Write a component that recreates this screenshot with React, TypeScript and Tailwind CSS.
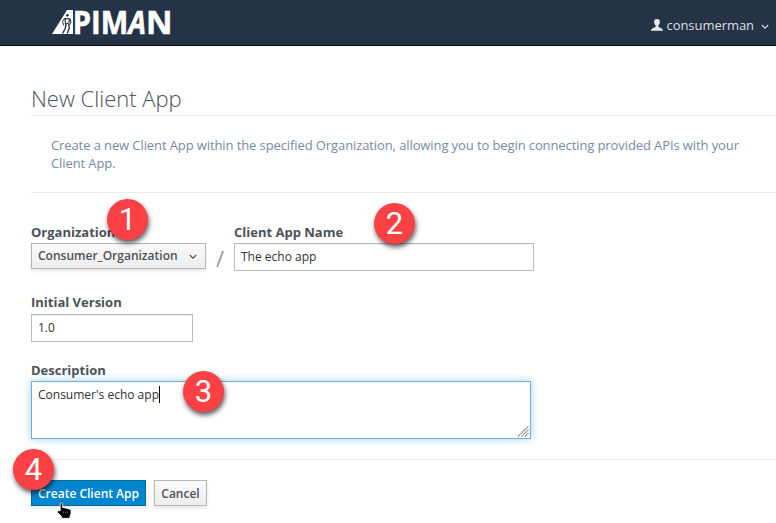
import React from "react";

function Logo() {
  return (
    <svg width="120" height="28" viewBox="0 0 120 28" className="block overflow-visible" aria-label="APIMAN">
      <path d="M0 25 L15 1 H21 V25 Z" fill="#fff" />
      <g stroke="#253346" fill="none" strokeLinecap="round" strokeLinejoin="round">
        <circle cx="15.3" cy="6.3" r="0.9" fill="#253346" strokeWidth="1" />
        <path d="M13 9.5 L17.5 9.8 L17 14 L13.5 15 Z" strokeWidth="1.2" />
        <path d="M12.5 9.5 L10.6 12.5 L11.5 16 M18 10 L19 13.5 L17.5 16" strokeWidth="1" />
        <path d="M14 15.5 L13.2 19.5 L10.8 24 M16.8 15.5 L17.2 19 L15.5 24" strokeWidth="1.4" />
      </g>
      <g fill="#fff" stroke="#fff" strokeWidth="0.6" fontFamily="'Open Sans', sans-serif" fontWeight="700" fontSize="33">
        <text x="20.8" y="24.7" textLength="55.5" lengthAdjust="spacingAndGlyphs">PIM</text>
        <text x="76.4" y="24.7" fontStyle="italic" textLength="17.5" lengthAdjust="spacingAndGlyphs">A</text>
        <text x="94" y="24.7" textLength="26.5" lengthAdjust="spacingAndGlyphs">N</text>
      </g>
    </svg>
  );
}

function Chevron({ className }: { className: string }) {
  return (
    <svg width="8" height="6" viewBox="0 0 8 6" className={className}>
      <path d="M0.8 1 L4 4.2 L7.2 1" fill="none" stroke="currentColor" strokeWidth="1.1" />
    </svg>
  );
}

function Badge({ n, className }: { n: string; className: string }) {
  return (
    <div
      className={`absolute flex size-[41px] items-center justify-center rounded-full bg-[#fc4144] font-['Roboto',sans-serif] text-[31px] leading-none text-white shadow-[1px_3px_5px_rgba(0,0,0,0.65)] ${className}`}
    >
      {n}
    </div>
  );
}

function Pointer() {
  return (
    <svg width="15" height="17" viewBox="0 0 15 17" className="absolute left-[57px] top-[502px]">
      <path
        d="M3.2 1.5 Q4.4 0.2 5.6 1.5 V5.5 L8 5.8 L10 6.5 L12.5 7 L14 8.5 V12 L13 14 V16.3 H4.5 V14.5 L0.6 10.5 V8.5 L3.2 8.8 Z"
        fill="#000"
        stroke="#fff"
        strokeWidth="0.8"
      />
      <path d="M6.5 9.5 V11 M8.5 9.5 V11 M10.5 9.5 V11" stroke="#aaa" strokeWidth="0.6" />
    </svg>
  );
}

const label = "block text-[13px] leading-[18px] font-bold text-[#4d5258]";
const input =
  "block h-7 border border-[#bababa] bg-white px-1.5 pb-0.5 text-[12px] text-[#333] shadow-[inset_0_1px_1px_rgba(3,3,3,0.075)] outline-none";
const button =
  "flex h-[26px] items-center border border-[#b7b7b7] bg-linear-to-b from-[#fafafa] to-[#ededed] px-1.5 text-[12px] font-semibold text-[#4d5258] shadow-[0_2px_3px_rgba(3,3,3,0.1)]";

export default function App() {
  return (
    <div className="relative h-[523px] w-[776px] overflow-hidden bg-white font-['Open_Sans',sans-serif]">
      <header className="flex h-[46px] justify-between border-b border-[#030914] bg-[#253346] pl-[52px] pr-[7px]">
        <div className="pt-[9px]">
          <Logo />
        </div>
        <div className="flex h-[51px] items-center text-[13px] text-[#dbdee1]">
          <svg width="12" height="12" viewBox="0 0 12 12" className="mr-[3px] -mt-0.5">
            <path
              d="M6 0 C8 0 9 1.2 8.9 3 C8.8 4.8 8 5.6 7.4 6.5 V8 C8.5 8.9 11.8 9 12 11.8 H0 C0.2 9 3.5 8.9 4.6 8 V6.5 C4 5.6 3.2 4.8 3.1 3 C3 1.2 4 0 6 0 Z"
              fill="#e8eaec"
            />
          </svg>
          <span className="tracking-[-0.05px]">consumerman</span>
          <Chevron className="ml-[7px] mt-0.5" />
        </div>
      </header>
      <main className="pl-[31px]">
        <h1 className="h-[70px] border-b border-[#ededed] pt-[37px] text-[22px] leading-[30px] font-light text-[#4d5258]">
          New Client App
        </h1>
        <p className="h-[77px] border-b border-[#ededed] pl-5 pt-5 pr-5 text-[13px] leading-[18px] tracking-[-0.1px] text-[#7a8b9f]">
          Create a new Client App within the specified Organization, allowing you to begin connecting provided APIs with your Client App.
        </p>
        <form className="pt-[30px]" onSubmit={(e) => e.preventDefault()}>
          <div className="flex h-12">
            <div>
              <span className={label}>Organization</span>
              <button type="button" className={`${button} mt-0.5 w-[175px]`}>
                Consumer_Organization
                <Chevron className="ml-auto mr-[2px] mt-0.5" />
              </button>
            </div>
            <span className="w-7 pt-5 text-center text-[22px] leading-[30px] text-[#999]">/</span>
            <div>
              <label className={label}>Client App Name</label>
              <input className={`${input} mt-0.5 w-[300px]`} defaultValue="The echo app" />
            </div>
          </div>
          <label className={`${label} mt-[22px]`}>Initial Version</label>
          <input className={`${input} mt-[3px] w-[162px]`} defaultValue="1.0" />
          <label className={`${label} mt-[19px]`}>Description</label>
          <div className="relative mt-0.5 flex h-[58px] w-[500px] border border-[#66afe9] px-1.5 pt-1 text-[12px] leading-[17px] text-[#333] shadow-[0_0_8px_rgba(102,175,233,0.6)]">
            <span>Consumer's echo app</span>
            <span className="h-[17px] w-px bg-black" />
            <svg width="11" height="11" viewBox="0 0 11 11" className="absolute bottom-px right-px">
              <path d="M0 10.5 L10.5 0 M3.5 10.5 L10.5 3.5 M7 10.5 L10.5 7" stroke="#666" strokeWidth="1.1" strokeDasharray="1.3 .5" />
            </svg>
          </div>
          <div className="mt-5 flex gap-2 border-t border-[#ededed] pt-5">
            <button type="submit" className="h-[26px] w-[115px] border border-[#006e9c] bg-[#0085cf] pt-0.5 text-[12px] font-semibold whitespace-nowrap text-white shadow-[0_2px_3px_rgba(3,3,3,0.1)]">
              Create Client App
            </button>
            <button type="button" className={`${button} w-[53px] justify-center pt-0.5`}>Cancel</button>
          </div>
        </form>
      </main>
      <Badge n="1" className="left-[107px] top-[199px]" />
      <Badge n="2" className="left-[374px] top-[203px]" />
      <Badge n="3" className="left-[183px] top-[371px]" />
      <Badge n="4" className="left-[13px] top-[449px]" />
      <Pointer />
    </div>
  );
}
